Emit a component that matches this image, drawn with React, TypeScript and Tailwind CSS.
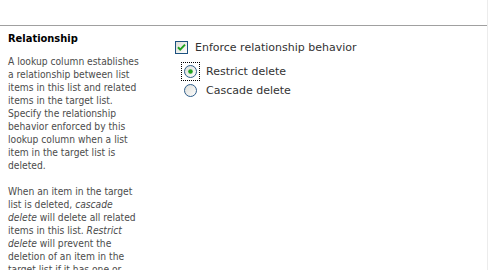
import React from 'react'

function CheckBox() {
  return (
    <svg width="13" height="13" viewBox="0 0 13 13" className="shrink-0">
      <defs>
        <linearGradient id="cbg" x1="0" y1="0" x2="1" y2="1">
          <stop offset="0" stopColor="#dcdcd6" />
          <stop offset="1" stopColor="#ffffff" />
        </linearGradient>
      </defs>
      <rect x="0.5" y="0.5" width="12" height="12" fill="url(#cbg)" stroke="#1c5180" />
      <path d="M3 6.2 L5.2 8.6 L10 3.6" fill="none" stroke="#21a121" strokeWidth="2" />
    </svg>
  )
}

function Radio({ checked }: { checked?: boolean }) {
  return (
    <svg width="13" height="13" viewBox="0 0 13 13" className="shrink-0">
      <defs>
        <linearGradient id="rbg" x1="0" y1="0" x2="1" y2="1">
          <stop offset="0" stopColor="#dcdcd6" />
          <stop offset="1" stopColor="#ffffff" />
        </linearGradient>
      </defs>
      <circle cx="6.5" cy="6.5" r="6" fill="url(#rbg)" stroke="#2f5e8a" />
      {checked && <circle cx="6.5" cy="6.5" r="2.3" fill="#21a121" />}
    </svg>
  )
}

const intro = [
  'A lookup column establishes',
  'a relationship between list',
  'items in this list and related',
  'items in the target list.',
  'Specify the relationship',
  'behavior enforced by this',
  'lookup column when a list',
  'item in the target list is',
  'deleted.',
]

export default function App() {
  return (
    <div className="w-[488px] h-[270px] overflow-hidden bg-white border-r border-[#ececec] text-[11px] leading-[13px]"
      style={{ fontFamily: '"DejaVu Sans Condensed", "Liberation Sans", sans-serif' }}>
      <div className="h-[25px]" />
      <div className="border-t border-[#a0a0a0] flex">
        {/* Description */}
        <div className="w-[142px] pl-2 pt-[6px] shrink-0 whitespace-nowrap">
          <h3 className="font-bold text-black">Relationship</h3>
          <div className="mt-[10px] text-[#4c4c4c] text-[10.2px]">
            <p>
              {intro.map(l => <span key={l} className="block">{l}</span>)}
            </p>
            <p className="mt-[13px]">
              <span className="block">When an item in the target</span>
              <span className="block">list is deleted, <i>cascade</i></span>
              <span className="block"><i>delete</i> will delete all related</span>
              <span className="block">items in this list. <i>Restrict</i></span>
              <span className="block"><i>delete</i> will prevent the</span>
              <span className="block">deletion of an item in the</span>
              <span className="block">target list if it has one or</span>
              <span className="block">more related items in this list.</span>
            </p>
          </div>
        </div>
        {/* Controls */}
        <div className="pl-[33px] pt-[15px] text-[#333333]" style={{ fontFamily: '"DejaVu Sans", Verdana, sans-serif' }}>
          <label className="flex items-center gap-[7px] h-[13px]">
            <CheckBox />
            <span>Enforce relationship behavior</span>
          </label>
          <div className="pl-[9px] mt-[11px] flex flex-col gap-[6px]">
            <label className="flex items-center gap-[9px] h-[13px]">
              <span className="outline-1 outline-dotted outline-black outline-offset-[2px] flex">
                <Radio checked />
              </span>
              <span>Restrict delete</span>
            </label>
            <label className="flex items-center gap-[9px] h-[13px]">
              <Radio />
              <span>Cascade delete</span>
            </label>
          </div>
        </div>
      </div>
    </div>
  )
}
